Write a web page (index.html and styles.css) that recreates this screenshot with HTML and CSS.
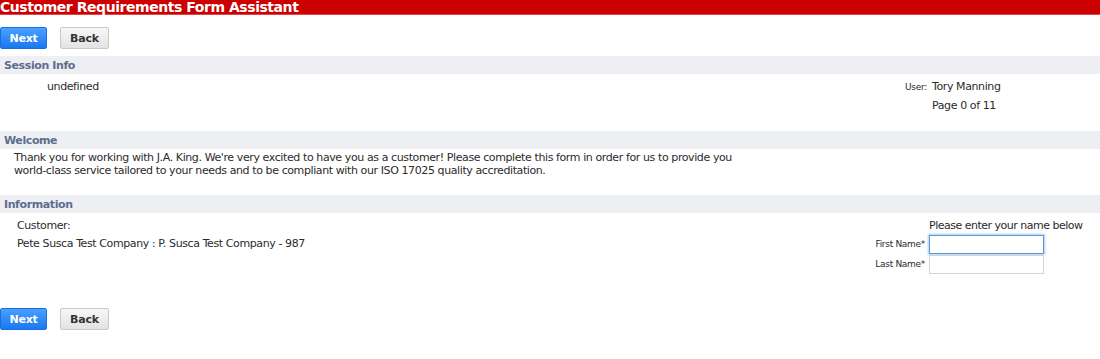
FILE: index.html
```html
<!DOCTYPE html>
<html>
<head>
<meta charset="utf-8">
<link rel="stylesheet" href="styles.css">
</head>
<body>
<div class="titlebar">Customer Requirements Form Assistant</div>
<div class="buttons top">
  <button class="btn btn-primary">Next</button>
  <button class="btn btn-default">Back</button>
</div>
<div class="section-head">Session Info</div>
<div class="session">
  <div class="session-left">undefined</div>
  <div class="session-right">
    <div class="user-row"><span class="small-label">User:</span><span>Tory Manning</span></div>
    <div class="page-row">Page 0 of 11</div>
  </div>
</div>
<div class="section-head welcome-head">Welcome</div>
<div class="welcome">
  <p>Thank you for working with J.A. King. We're very excited to have you as a customer! Please complete this form in order for us to provide you<br>world-class service tailored to your needs and to be compliant with our ISO 17025 quality accreditation.</p>
</div>
<div class="section-head info-head">Information</div>
<div class="info">
  <div class="info-left">
    <div class="line">Customer:</div>
    <div class="line">Pete Susca Test Company : P. Susca Test Company - 987</div>
  </div>
  <div class="info-right">
    <div class="prompt">Please enter your name below</div>
    <div class="field"><label class="small-label" for="fn">First Name*</label><input id="fn" class="text-input focused" type="text" autofocus></div>
    <div class="field"><label class="small-label" for="ln">Last Name*</label><input id="ln" class="text-input" type="text"></div>
  </div>
</div>
<div class="buttons bottom">
  <button class="btn btn-primary">Next</button>
  <button class="btn btn-default">Back</button>
</div>
</body>
</html>
```
FILE: styles.css
```css
* { box-sizing: border-box; }
html, body { margin: 0; padding: 0; background: #fff; }
body {
  font-family: "DejaVu Sans", Verdana, sans-serif;
  font-size: 11px;
  letter-spacing: -0.4px;
  color: #2b2b2b;
  width: 1100px;
}
.titlebar {
  background: #cc0000;
  color: #fff;
  font-weight: bold;
  font-size: 14px;
  letter-spacing: -0.45px;
  line-height: 14px;
  height: 15px;
  border-bottom: 1px solid #e04a4e;
  white-space: nowrap;
}
.buttons { display: flex; gap: 13px; }
.buttons.top { padding: 12px 0 7px 0; }
.buttons.bottom { padding: 33px 0 0 0; }
.btn {
  font-family: inherit;
  font-size: 11px;
  letter-spacing: -0.2px;
  font-weight: bold;
  height: 22px;
  padding: 0;
  border-radius: 2px;
  cursor: pointer;
}
.btn-primary {
  width: 47px;
  color: #fff;
  background: linear-gradient(#4aa0ff, #1a78f0);
  border: 1px solid #1a6ee0;
}
.btn-default {
  width: 49px;
  color: #333;
  background: linear-gradient(#f7f7f7, #e3e3e3);
  border: 1px solid #c9c9c9;
}
.section-head {
  background: #eeeff3;
  color: #5c6d8e;
  font-weight: bold;
  height: 18px;
  line-height: 19px;
  padding-left: 4px;
}
.session {
  display: flex;
  justify-content: space-between;
  height: 57px;
  padding-top: 6px;
}
.session-left { padding-left: 47px; line-height: 13px; }
.session-right { width: 195px; }
.user-row { display: flex; align-items: baseline; line-height: 13px; }
.user-row .small-label { width: 27px; }
.small-label { font-size: 9px; letter-spacing: -0.3px; color: #2b2b2b; }
.page-row { padding-left: 27px; padding-top: 5px; line-height: 13px; }
.welcome { height: 46px; padding: 2px 0 0 14px; }
.welcome p { margin: 0; line-height: 13px; }
.info {
  display: flex;
  justify-content: space-between;
  padding-top: 6px;
}
.info-left { padding-left: 17px; }
.info-left .line { line-height: 13px; margin-bottom: 5px; }
.info-right { width: 171px; }
.prompt { line-height: 13px; margin-bottom: 3px; white-space: nowrap; letter-spacing: -0.5px; }
.field { display: flex; align-items: flex-start; height: 20px; margin-left: -60px; }
.field label { width: 60px; text-align: right; padding-right: 4px; line-height: 19px; }
.text-input {
  width: 115px;
  height: 19px;
  border: 1px solid #d4d4d4;
  font-family: inherit;
  font-size: 11px;
  padding: 0 3px;
  outline: none;
  margin: 0;
}
.text-input.focused { border: 1px solid #5b9ad8; box-shadow: 0 0 2px 1px #a9cdf0; }
```
